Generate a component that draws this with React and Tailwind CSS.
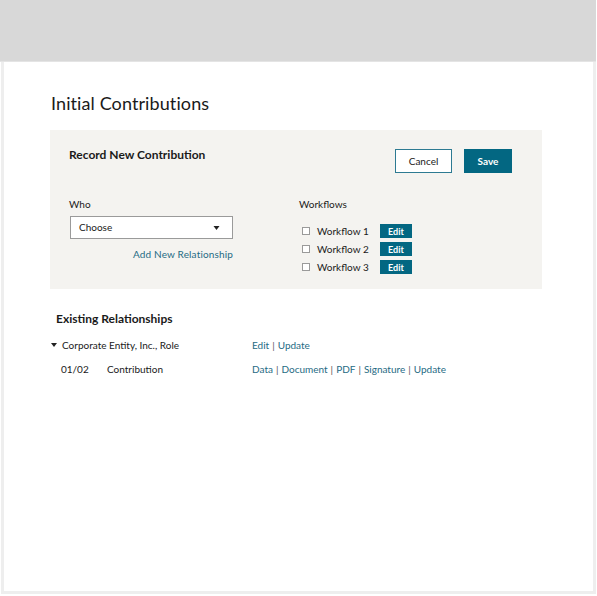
import React from 'react';

const workflows = ['Workflow 1', 'Workflow 2', 'Workflow 3'];

function Caret({ className }) {
  return (
    <svg viewBox="0 0 6 4" className={className}>
      <path d="M0 0 L6 0 L3 4 Z" fill="currentColor" />
    </svg>
  );
}

function LinkList({ items }) {
  return (
    <div className="flex items-center text-[#1f6b84]">
      {items.map((item, i) => (
        <React.Fragment key={item}>
          {i > 0 && <span className="px-[3px] text-[#555]">|</span>}
          <a href="#" className="hover:underline">{item}</a>
        </React.Fragment>
      ))}
    </div>
  );
}

export default function App() {
  return (
    <div className="w-[597px] h-[596px] bg-white text-[#1a1a1a] font-['Lato','Open_Sans',sans-serif]">
      <div className="w-[596px] h-[594px] flex flex-col">
        <div className="h-[62px] bg-[#d8d8d8] border-b border-[#e4e4e4] shrink-0" />
        <div className="flex-1 ml-[1px] border-x-[3px] border-b-[3px] border-[#eeeeee] pl-[47px] pt-[29px]">
          <h1 className="text-[18px] leading-[24px] font-normal tracking-[0.1px]">Initial Contributions</h1>

          {/* record panel */}
          <div className="mt-[15px] ml-[-1px] w-[492px] h-[159px] bg-[#f4f3f0] pl-[19px] pr-[30px] pt-[16px]">
            <div className="flex justify-between items-start">
              <h2 className="text-[12px] leading-[18px] font-bold">Record New Contribution</h2>
              <div className="flex gap-[12px] mt-[3px]">
                <button className="w-[57px] h-[24px] bg-white border border-[#2d7a92] text-[10px]">Cancel</button>
                <button className="w-[48px] h-[24px] bg-[#036782] text-white text-[10px] font-bold">Save</button>
              </div>
            </div>

            <div className="flex mt-[24px] text-[10px]">
              <div className="w-[230px]">
                <div className="leading-[14px]">Who</div>
                <div className="mt-[5px] ml-[1px] w-[163px] h-[23px] bg-white border border-[#9a9a9a] flex items-center justify-between pl-[8px] pr-[12px]">
                  <span>Choose</span>
                  <Caret className="w-[7px] h-[4px] text-[#222]" />
                </div>
                <div className="w-[164px] flex justify-end mt-[8px]">
                  <a href="#" className="text-[#1f6b84] leading-[14px] tracking-[0.15px]">Add New Relationship</a>
                </div>
              </div>

              <div>
                <div className="leading-[14px]">Workflows</div>
                <div className="mt-[13px] flex flex-col gap-[4px]">
                  {workflows.map((w) => (
                    <div key={w} className="flex items-center h-[14px]">
                      <span className="ml-[3px] w-[8px] h-[8px] border border-[#9a9a9a] bg-white" />
                      <span className="ml-[7px] w-[63px]">{w}</span>
                      <button className="w-[32px] h-[14px] bg-[#036782] text-white text-[9px] font-bold leading-none">Edit</button>
                    </div>
                  ))}
                </div>
              </div>
            </div>
          </div>

          {/* existing */}
          <h2 className="mt-[21px] ml-[5px] text-[12px] leading-[18px] font-bold">Existing Relationships</h2>
          <div className="mt-[10px] text-[10px] leading-[14px]">
            <div className="flex items-center">
              <div className="w-[201px] flex items-center">
                <Caret className="w-[6px] h-[4px] text-[#222]" />
                <span className="ml-[5px]">Corporate Entity, Inc., Role</span>
              </div>
              <LinkList items={['Edit', 'Update']} />
            </div>
            <div className="flex items-center mt-[10px]">
              <span className="ml-[10px] w-[46px]">01/02</span>
              <span className="w-[145px]">Contribution</span>
              <LinkList items={['Data', 'Document', 'PDF', 'Signature', 'Update']} />
            </div>
          </div>
        </div>
      </div>
    </div>
  );
}
